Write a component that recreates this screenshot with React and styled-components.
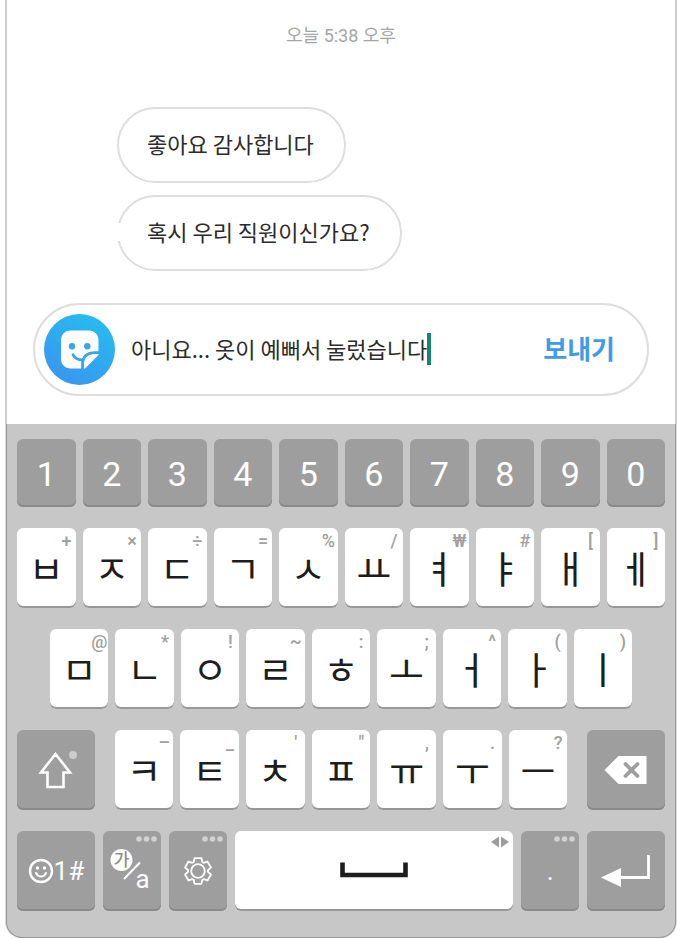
import { useState } from 'react'
import styled, { createGlobalStyle } from 'styled-components'

const sans = `Roboto, 'Noto Sans CJK KR', sans-serif`
const korean = `'Noto Sans CJK KR', sans-serif`

const GlobalStyle = createGlobalStyle`
  * {
    box-sizing: border-box;
  }
  body {
    margin: 0;
    background-color: #ffffff;
    font-family: ${korean};
  }
`

const Phone = styled.main`
  margin: 0 3px 0 5px;
`

const Chat = styled.section`
  padding: 24px 26px 28px;
  border: 2px solid #cdcdcd;
  border-width: 0 2px;
`

const Timestamp = styled.p`
  margin: 0 0 59px;
  color: #a6a6a6;
  font-family: ${sans};
  font-size: 18px;
  line-height: 24px;
  text-align: center;
`

const Messages = styled.div`
  display: flex;
  flex-direction: column;
  align-items: flex-start;
  gap: 12px;
  margin: 0 0 32px 84px;
`

const Bubble = styled.p`
  position: relative;
  margin: 0;
  padding: 18px 30px 22px 28px;
  border: 2px solid #dedede;
  border-radius: 38px;
  color: #2b2b2b;
  font-size: 22px;
  line-height: 32px;
`

const BubbleGap = styled.span`
  position: absolute;
  top: 26px;
  left: -2px;
  width: 4px;
  height: 18px;
  background-color: #ffffff;
`

const Composer = styled.form`
  display: flex;
  align-items: center;
  padding: 9px 32px 9px 9px;
  height: 93px;
  border: 2px solid #dedede;
  border-radius: 47px;
`

const StickerButton = styled.button`
  display: flex;
  padding: 0;
  border: none;
  background: none;
  cursor: pointer;
`

const MessageBox = styled.div`
  display: flex;
  flex: 1;
  align-items: center;
  min-width: 0;
  padding: 0 0 2px 16px;
`

const MessageInput = styled.input`
  field-sizing: content;
  min-width: 0;
  padding: 0 0 2px;
  border: none;
  outline: none;
  background: none;
  color: #2b2b2b;
  caret-color: transparent;
  font-family: ${korean};
  font-size: 22px;
  line-height: 32px;
`

const Caret = styled.span`
  flex: none;
  width: 4px;
  height: 32px;
  background-color: #1b8470;
`

const SendButton = styled.button`
  flex: none;
  padding: 0 0 4px;
  border: none;
  background: none;
  color: #3e9be6;
  font-family: ${korean};
  font-size: 26px;
  font-weight: 700;
  line-height: 32px;
  cursor: pointer;
`

const Keyboard = styled.section`
  display: flex;
  flex-direction: column;
  gap: 21px;
  margin: 0 1px;
  padding: 15px 10px 26px;
  border: 1px solid #989898;
  border-top: none;
  border-radius: 0 0 16px 16px;
  background-color: #c7c7c7;
  box-shadow: -1px 0 #dcdcdc, 1px 0 #dcdcdc;
`

const KeyRow = styled.div`
  display: flex;
  gap: ${props => props.$gap ?? '7px'};
  padding: 0 ${props => props.$inset ?? '0'};
`

const Key = styled.button`
  position: relative;
  display: flex;
  flex: 1 1 0;
  align-items: center;
  justify-content: center;
  min-width: 0;
  height: 80px;
  padding: 0 0 2px;
  border: none;
  border-radius: 6px;
  background-color: #ffffff;
  box-shadow: inset 0 -2px #979797;
  color: #1d1d1d;
  font-family: ${korean};
  font-size: 38px;
  line-height: 40px;
  cursor: pointer;
`

const DarkKey = styled(Key)`
  flex: ${props => (props.$basis ? `0 0 ${props.$basis}` : '1 1 0')};
  padding: 0;
  background-color: #9e9e9e;
  box-shadow: inset 0 -2px #8a8a8a;
  color: #ffffff;
  font-family: ${sans};
  font-size: 26px;
`

const NumberKey = styled(DarkKey)`
  height: 68px;
  padding-top: 2px;
  font-size: 34px;
`

const Hint = styled.span`
  position: absolute;
  top: 4px;
  right: 0;
  width: 18px;
  color: #a0a0a0;
  font-family: ${sans};
  font-size: 18px;
  font-weight: 500;
  line-height: 18px;
  text-align: center;
`

const CornerIcon = styled.svg`
  position: absolute;
  top: 4px;
  right: 3px;
`

const Letters = styled.div`
  display: flex;
  flex: 1;
  gap: 7px;
  padding: 0 13px;
`

const topRow = [
    ['ㅂ', '+'], ['ㅈ', '×'], ['ㄷ', '÷'], ['ㄱ', '='], ['ㅅ', '%'],
    ['ㅛ', '/'], ['ㅕ', '₩'], ['ㅑ', '#'], ['ㅐ', '['], ['ㅔ', ']'],
]
const homeRow = [
    ['ㅁ', '@'], ['ㄴ', '*'], ['ㅇ', '!'], ['ㄹ', '~'], ['ㅎ', ':'],
    ['ㅗ', ';'], ['ㅓ', '^'], ['ㅏ', '('], ['ㅣ', ')'],
]
const bottomRow = [
    ['ㅋ', '–'], ['ㅌ', '_'], ['ㅊ', '\''], ['ㅍ', '"'],
    ['ㅠ', ','], ['ㅜ', '.'], ['ㅡ', '?'],
]

function LetterKeys({ keys, onType }) {
    return keys.map(([letter, hint]) => (
        <Key key={letter} type="button" onClick={() => onType(letter)}>
            {letter}
            <Hint>{hint}</Hint>
        </Key>
    ))
}

function MoreDots() {
    return (
        <CornerIcon width="24" height="8" fill="#d2d2d2" aria-hidden="true">
            <circle cx="5" cy="4" r="2.8"/>
            <circle cx="12.5" cy="4" r="2.8"/>
            <circle cx="20" cy="4" r="2.8"/>
        </CornerIcon>
    )
}

function StickerIcon() {
    return (
        <svg width="71" height="71" viewBox="0 0 71 71" aria-hidden="true">
            <defs>
                <linearGradient id="sticker" x1="0.25" y1="0.95" x2="0.75" y2="0.05">
                    <stop offset="0" stopColor="#3897f0"/>
                    <stop offset="1" stopColor="#27bbee"/>
                </linearGradient>
            </defs>
            <circle cx="35.5" cy="35.5" r="35.5" fill="url(#sticker)"/>
            <path d="M26 16.5h19.5a9 9 0 0 1 9 9V41L41 54.5H26a9 9 0 0 1-9-9v-20a9 9 0 0 1 9-9z" fill="#ffffff"/>
            <g fill="none" stroke="#35a5ef" strokeWidth="2.8">
                <path d="M56 38.700h-4.500c-8.500 0-13 4-13 12v5"/>
                <path d="M29 40.800c2 3.700 5.500 5.200 10 5" strokeLinecap="round"/>
            </g>
            <circle cx="28" cy="32.300" r="3.200" fill="#35a5ef"/>
            <circle cx="43.300" cy="32.300" r="3.200" fill="#35a5ef"/>
        </svg>
    )
}

function ShiftIcon() {
    return (
        <svg width="40" height="40" viewBox="0 0 40 40" aria-hidden="true">
            <path d="M19.500 4L34 22.500h-6.500V37h-16V22.500H5z" fill="none" stroke="#ffffff" strokeWidth="2.600"/>
        </svg>
    )
}

function BackspaceIcon() {
    return (
        <svg width="44" height="28" viewBox="0 0 44 28" aria-hidden="true">
            <path d="M0.500 14L14.500 0H42.500v28H14.500z" fill="#ffffff"/>
            <path d="M21.500 8l12 12M33.500 8L21.500 20" stroke="#9e9e9e" strokeWidth="3.800" strokeLinecap="round"/>
        </svg>
    )
}

function SmileIcon() {
    return (
        <svg width="26" height="26" viewBox="0 0 26 26" fill="none" stroke="#ffffff" aria-hidden="true">
            <circle cx="13" cy="13" r="11" strokeWidth="2.400"/>
            <path d="M8 15c2 4.500 8 4.500 10 0" strokeWidth="2" strokeLinecap="round"/>
            <circle cx="9.500" cy="10" r="1.700" fill="#ffffff" stroke="none"/>
            <circle cx="16.500" cy="10" r="1.700" fill="#ffffff" stroke="none"/>
        </svg>
    )
}

function LanguageIcon() {
    return (
        <svg width="44" height="56" viewBox="0 0 44 56" fill="#ffffff" aria-hidden="true">
            <circle cx="11.500" cy="17" r="11"/>
            <text x="11.500" y="23" fill="#8f8f8f" fontFamily="Noto Sans CJK KR" fontSize="17" fontWeight="500" textAnchor="middle">가</text>
            <path d="M14 36L30 19.500" stroke="#ffffff" strokeWidth="2"/>
            <text x="32.500" y="45" fontFamily="Roboto" fontSize="26" textAnchor="middle">a</text>
        </svg>
    )
}

const gearPoints = [0, 60, 120, 180, 240, 300]
    .flatMap(angle => [[-25, 10], [-15, 13.4], [15, 13.4], [25, 10]].map(([offset, radius]) => {
        const radians = (angle + offset) * Math.PI / 180
        return `${15 + radius * Math.sin(radians)},${15 - radius * Math.cos(radians)}`
    }))
    .join(' ')

function GearIcon() {
    return (
        <svg width="30" height="30" viewBox="0 0 30 30" fill="none" stroke="#ffffff" strokeWidth="1.8" strokeLinejoin="round" aria-hidden="true">
            <polygon points={gearPoints}/>
            <circle cx="15" cy="15" r="6.800"/>
        </svg>
    )
}

function SpaceIcon() {
    return (
        <svg width="68" height="16" viewBox="0 0 68 16" aria-hidden="true">
            <path d="M2.500 0.500v12.500h63V0.500" fill="none" stroke="#1d1d1d" strokeWidth="4.600"/>
        </svg>
    )
}

function EnterIcon() {
    return (
        <svg width="50" height="36" viewBox="0 0 50 36" aria-hidden="true">
            <path d="M47.500 2v22.500H20" fill="none" stroke="#ffffff" strokeWidth="2.800"/>
            <path d="M0 24.500L20 15v19z" fill="#ffffff"/>
        </svg>
    )
}

function App() {
    const [message, setMessage] = useState('아니요... 옷이 예뻐서 눌렀습니다')
    const type = text => setMessage(current => current + text)

    return (
        <Phone>
            <GlobalStyle/>
            <Chat>
                <Timestamp>오늘 5:38 오후</Timestamp>
                <Messages>
                    <Bubble>좋아요 감사합니다</Bubble>
                    <Bubble>
                        <BubbleGap/>
                        혹시 우리 직원이신가요?
                    </Bubble>
                </Messages>
                <Composer onSubmit={event => event.preventDefault()}>
                    <StickerButton type="button" aria-label="스티커">
                        <StickerIcon/>
                    </StickerButton>
                    <MessageBox>
                        <MessageInput
                            aria-label="메시지"
                            value={message}
                            onChange={event => setMessage(event.target.value)}
                        />
                        <Caret/>
                    </MessageBox>
                    <SendButton type="submit">보내기</SendButton>
                </Composer>
            </Chat>
            <Keyboard>
                <KeyRow>
                    {[...'1234567890'].map(digit => (
                        <NumberKey key={digit} type="button" onClick={() => type(digit)}>{digit}</NumberKey>
                    ))}
                </KeyRow>
                <KeyRow>
                    <LetterKeys keys={topRow} onType={type}/>
                </KeyRow>
                <KeyRow $inset="33px">
                    <LetterKeys keys={homeRow} onType={type}/>
                </KeyRow>
                <KeyRow>
                    <DarkKey $basis="12%" type="button" aria-label="Shift">
                        <ShiftIcon/>
                        <CornerIcon width="40" height="40" aria-hidden="true">
                            <circle cx="21" cy="21" r="4" fill="#cccccc"/>
                        </CornerIcon>
                    </DarkKey>
                    <Letters>
                        <LetterKeys keys={bottomRow} onType={type}/>
                    </Letters>
                    <DarkKey $basis="12%" type="button" aria-label="Backspace" onClick={() => setMessage(message.slice(0, -1))}>
                        <BackspaceIcon/>
                    </DarkKey>
                </KeyRow>
                <KeyRow $gap="8px">
                    <DarkKey $basis="12%" type="button">
                        <SmileIcon/>
                        1#
                    </DarkKey>
                    <DarkKey $basis="9%" type="button" aria-label="한/영">
                        <MoreDots/>
                        <LanguageIcon/>
                    </DarkKey>
                    <DarkKey $basis="9%" type="button" aria-label="설정">
                        <MoreDots/>
                        <GearIcon/>
                    </DarkKey>
                    <Key type="button" aria-label="Space" onClick={() => type(' ')}>
                        <CornerIcon width="20" height="14" fill="#9c9c9c" aria-hidden="true">
                            <path d="M1 7l8-5.500v11zM19 7l-8-5.500v11z"/>
                        </CornerIcon>
                        <SpaceIcon/>
                    </Key>
                    <DarkKey $basis="9%" type="button" onClick={() => type('.')}>
                        <MoreDots/>
                        .
                    </DarkKey>
                    <DarkKey $basis="12%" type="button" aria-label="Enter">
                        <EnterIcon/>
                    </DarkKey>
                </KeyRow>
            </Keyboard>
        </Phone>
    )
}

export default App
